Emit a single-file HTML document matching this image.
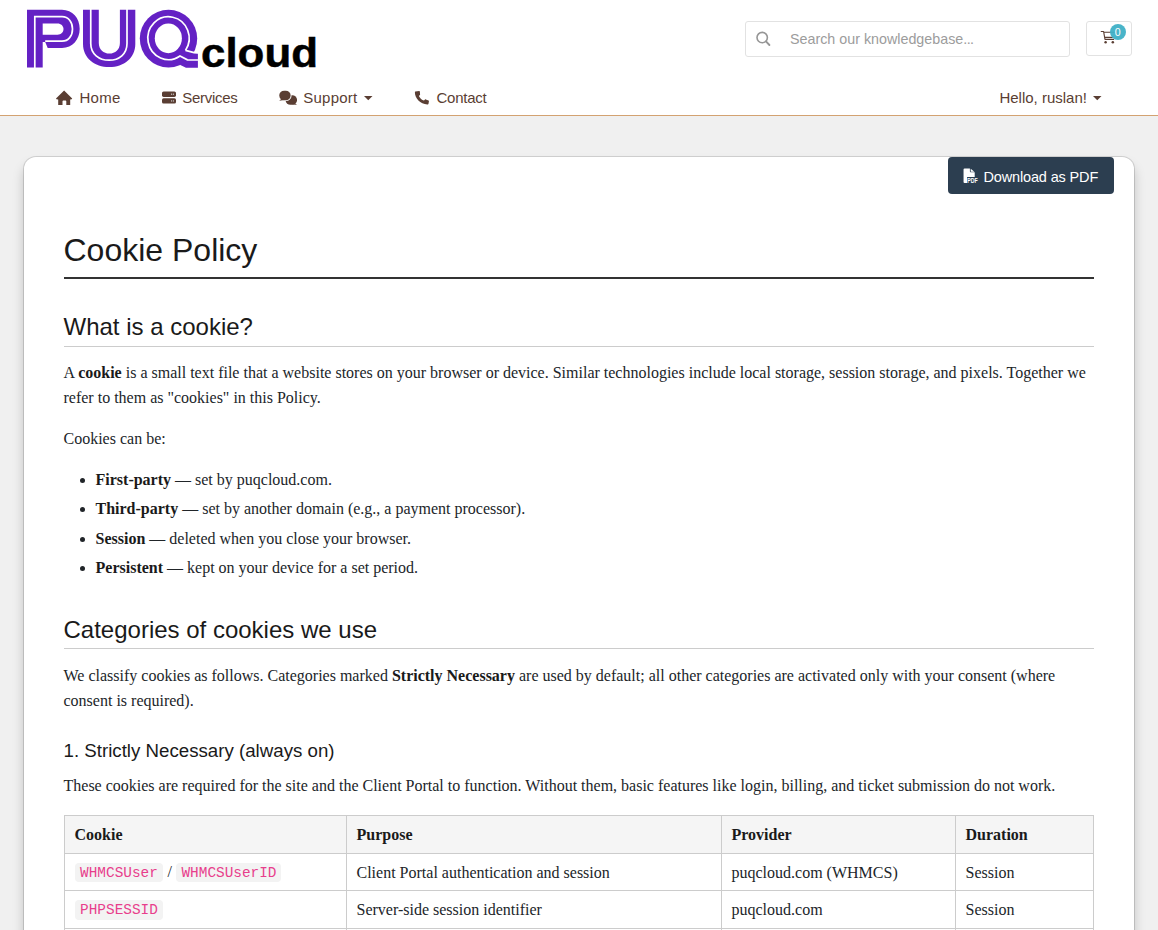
<!DOCTYPE html>
<html><head><meta charset="utf-8">
<style>
*{box-sizing:border-box}
html,body{margin:0;padding:0}
body{width:1158px;height:930px;overflow:hidden;background:#f0f0f0;font-family:"Liberation Sans",sans-serif;position:relative}
.header{position:absolute;left:0;top:0;width:1158px;height:116px;background:#fff;border-bottom:1px solid #d3a271}
.logo{position:absolute;left:26px;top:8px}
.search{position:absolute;left:745px;top:21px;width:325px;height:36px;border:1px solid #e2e2e2;border-radius:3px;background:#fff}
.search .ph{position:absolute;left:44px;top:9px;font-size:14.3px;color:#9c9c9c}
.cart{position:absolute;left:1086px;top:21px;width:46px;height:35px;border:1px solid #e2e2e2;border-radius:3px;background:#fff}
.nav{position:absolute;font-size:15px;color:#5a3e33}
.card{position:absolute;left:24px;top:157px;width:1110px;height:900px;background:#fff;border-radius:12px;box-shadow:0 0 0 1px rgba(0,0,0,.13),0 8px 12px rgba(0,0,0,.21)}
.pdf{position:absolute;left:948px;top:157px;width:166px;height:37px;background:#2c3e50;border-radius:4px;color:#fff;font-size:14.5px}
.content{position:absolute;left:63.5px;top:230px;width:1030px;font-family:"Liberation Serif",serif;font-size:16px;line-height:25px;color:#212529}
h1{margin:0;font-family:"Liberation Sans",sans-serif;font-weight:400;font-size:32px;line-height:40px;color:#1a1a1a;border-bottom:2px solid #333;height:49px}
h2{margin:0;font-family:"Liberation Sans",sans-serif;font-weight:400;font-size:24px;line-height:30px;color:#1a1a1a;border-bottom:1px solid #ccc}
h3{margin:0;font-family:"Liberation Sans",sans-serif;font-weight:400;font-size:18.7px;line-height:24px;color:#1a1a1a}
p{margin:0 0 16px}
ul{margin:0;padding-left:32px}
li{margin-bottom:4.4px}
b{color:#1a1a1a}
table{border-collapse:collapse;width:1030px}
th,td{border:1px solid #ccc;padding:0 10px;text-align:left;height:37.5px}
th{background:#f5f5f5;color:#1a1a1a;height:38px}
code{font-family:"Liberation Mono",monospace;font-size:14.4px;color:#e83e8c;background:#f3f3f3;border-radius:4px;padding:1.7px 5px;margin:0 .6px}
</style></head><body>
<div class="header">
<svg class="logo" width="330" height="80" viewBox="0 0 330 80" style="position:absolute;left:0;top:0">
 <g fill="#6421c4">
  <path d="M27,9.7 H62 C72.5,9.7 79.7,18 79.7,28.85 C79.7,39.7 72.5,48 62,48 H47.7 L45.2,41.9 H42.7 V67.5 H27 Z"/>
  <path d="M83,9.7 V44 C83,58 94.5,67.1 109.15,67.1 C123.8,67.1 135.3,58 135.3,44 V9.7 Z"/>
  <ellipse cx="168.5" cy="38.6" rx="28.7" ry="28.9"/>
  <path d="M178,56 L180.3,64.95 L186,67.7 H197.9 V53.2 L193.9,53 L185.5,51 Z"/>
 </g>
 <g fill="#fff">
  <path d="M42.7,23.4 H57.5 C61,23.4 63.5,25.8 63.5,29 C63.5,32.3 61,34.7 57.5,34.7 H42.7 Z"/>
  <path d="M98.8,0 V43 C98.8,49.5 103.5,53.6 109.35,53.6 C115.2,53.6 119.9,49.5 119.9,43 V0 Z"/>
  <ellipse cx="168.35" cy="38.3" rx="13.55" ry="14.9"/>
 </g>
 <g fill="none" stroke="#fff" stroke-width="1.7">
  <path d="M34.8,68 V16.65 H62 C68.5,16.65 72.5,22 72.5,28.9 C72.5,35.8 68.5,41.15 62,41.15 H45.2"/>
  <path d="M90.75,9 V43.5 C90.75,54 99,60.2 109.1,60.2 C119.2,60.2 127,54 127,43.5 V9"/>
  <path d="M185.5,50.35 A20.65,21.4 0 1 0 180,55.97 L187.4,59.8 L199,60"/>
  <path d="M185.5,50.35 L194,52.6 L199,52.8"/>
 </g>
 <text x="201" y="67" font-family="Liberation Sans" font-weight="700" font-size="40.5" letter-spacing="0" textLength="117" lengthAdjust="spacingAndGlyphs" fill="#000" stroke="#000" stroke-width="0.5">cloud</text>
</svg>
<div class="search">
 <svg width="20" height="20" style="position:absolute;left:9px;top:9px" viewBox="0 0 20 20"><circle cx="7.2" cy="6.6" r="5.2" fill="none" stroke="#969696" stroke-width="1.6"/><path d="M11,10.4 L14.4,14" stroke="#969696" stroke-width="1.9" stroke-linecap="round"/></svg>
 <span class="ph">Search our knowledgebase<span style="letter-spacing:-0.6px">...</span></span>
</div>
<div class="cart">
 <svg width="46" height="35" style="position:absolute;left:-1px;top:-1px" viewBox="0 0 46 35">
  <path d="M15.2,10.5 H17.6 L19,18.4 H27.6 M17.8,11.2 H29 M18.7,16.4 H26.8" fill="none" stroke="#5a3e33" stroke-width="1.15" stroke-linejoin="round" stroke-linecap="round"/>
  <circle cx="19.6" cy="21.3" r="1.25" fill="#5a3e33"/><circle cx="26.8" cy="21.3" r="1.25" fill="#5a3e33"/>
  <circle cx="32" cy="11" r="8" fill="#3fb0c6" fill-opacity="0.95"/>
  <text x="31.7" y="14.8" text-anchor="middle" font-family="Liberation Sans" font-size="10.6" fill="#fff">0</text>
 </svg>
</div>
<div class="nav" style="left:0;top:0;width:1158px;height:115px">
 <svg width="17" height="15" viewBox="0 0 17 15" style="position:absolute;left:56px;top:90.5px;overflow:visible"><path d="M8.1,-0.5 L0,7.4 L0.5,8.2 L2.2,8.5 V14.1 H6.5 V10.5 C6.5,9.9 7,9.5 7.6,9.5 H9.2 C9.8,9.5 10.3,9.9 10.3,10.5 V14.1 H14.2 V8.5 L15.7,8.2 L16.2,7.4 Z" fill="#5a3e33"/></svg>
 <span style="position:absolute;left:79.5px;top:89px;letter-spacing:0.25px">Home</span>
 <svg width="15" height="13" viewBox="0 0 15 13" style="position:absolute;left:162px;top:91px"><rect x="0" y="0.5" width="14" height="5.4" rx="1.6" fill="#5a3e33"/><rect x="0" y="7.2" width="14" height="5.4" rx="1.6" fill="#5a3e33"/><circle cx="9.6" cy="3.2" r=".6" fill="#ddd"/><circle cx="11.4" cy="3.2" r=".6" fill="#ddd"/><circle cx="9.6" cy="9.9" r=".6" fill="#ddd"/><circle cx="11.4" cy="9.9" r=".6" fill="#ddd"/></svg>
 <span style="position:absolute;left:182.2px;top:89px;letter-spacing:-0.28px">Services</span>
 <svg width="19" height="16" viewBox="0 0 19 16" style="position:absolute;left:279px;top:90px"><rect x="6.6" y="5.2" width="11.4" height="9.5" rx="4.8" ry="4.4" fill="#5a3e33"/><path d="M15,13 L18.2,14.9 L13,14.2 Z" fill="#5a3e33"/><rect x="-0.6" y="-0.2" width="13.1" height="11.3" rx="5.6" ry="5.2" fill="#fff"/><rect x="0.3" y="0.7" width="11.3" height="9.5" rx="4.8" ry="4.4" fill="#5a3e33"/><path d="M2.8,8.6 L0.2,10.8 L5.5,9.9 Z" fill="#5a3e33"/></svg>
 <span style="position:absolute;left:303.2px;top:89px;letter-spacing:0.25px">Support</span>
 <svg width="9" height="5" viewBox="0 0 9 5" style="position:absolute;left:363.5px;top:95.5px"><path d="M0,0 H8.5 L4.25,4.3 Z" fill="#5a3e33"/></svg>
 <svg width="16" height="16" viewBox="0 0 16 16" style="position:absolute;left:414px;top:90px;overflow:visible"><path d="M1.3,1.6 L5.2,0.9 C5.5,0.85 5.8,1.1 5.85,1.4 L6.1,4.6 C6.1,4.9 5.9,5.2 5.6,5.3 L4.9,5.9 C5.9,8.2 7.9,10 10,10.6 L10.8,9.7 C11,9.4 11.4,9.3 11.7,9.4 L14.6,10.6 C14.9,10.9 15,11.2 14.9,11.5 L14.5,13.7 C14.4,14.1 14.1,14.4 13.7,14.4 C6.6,14.6 0.6,8.4 0.9,2.1 C0.9,1.85 1.05,1.65 1.3,1.6 Z" fill="#5a3e33"/></svg>
 <span style="position:absolute;left:436.5px;top:89px;letter-spacing:-0.25px">Contact</span>
 <span style="position:absolute;left:999.4px;top:89px">Hello, ruslan!</span>
 <svg width="9" height="5" viewBox="0 0 9 5" style="position:absolute;left:1092.8px;top:95.5px"><path d="M0,0 H8.5 L4.25,4.3 Z" fill="#5a3e33"/></svg>
</div>
</div>
<div class="card"></div>
<div class="pdf">
 <svg width="16" height="16" viewBox="0 0 16 16" style="position:absolute;left:15px;top:11px;overflow:visible"><path d="M0.55,1.6 Q0.55,0.55 1.6,0.55 H6.9 V3.6 C6.9,4 7.1,4.3 7.5,4.3 H11.7 V8.9 H4.1 V15 H1.6 Q0.55,15 0.55,14 Z M7.7,0.8 L11.4,3.7 H7.7 Z" fill="#fff"/><text x="4.3" y="15" font-family="Liberation Sans" font-weight="700" font-size="7.3" fill="#fff" textLength="10.4" lengthAdjust="spacingAndGlyphs">PDF</text></svg>
 <span style="position:absolute;left:35.5px;top:11.5px;letter-spacing:-0.15px">Download as PDF</span>
</div>
<div class="content">
<h1>Cookie Policy</h1>
<h2 id="h2a" style="margin-top:33px;height:35px">What is a cookie?</h2>
<p id="p1" style="margin-top:13px">A <b>cookie</b> is a small text file that a website stores on your browser or device. Similar technologies include local storage, session storage, and pixels. Together we refer to them as "cookies" in this Policy.</p>
<p>Cookies can be:</p>
<ul>
<li><b>First-party</b> — set by puqcloud.com.</li>
<li><b>Third-party</b> — set by another domain (e.g., a payment processor).</li>
<li><b>Session</b> — deleted when you close your browser.</li>
<li><b>Persistent</b> — kept on your device for a set period.</li>
</ul>
<h2 id="h2b" style="margin-top:35px;height:34px">Categories of cookies we use</h2>
<p style="margin-top:14px;margin-bottom:0">We classify cookies as follows. Categories marked <b>Strictly Necessary</b> are used by default; all other categories are activated only with your consent (where consent is required).</p>
<h3 style="margin-top:26.3px">1. Strictly Necessary (always on)</h3>
<p style="margin-top:10px;margin-bottom:0">These cookies are required for the site and the Client Portal to function. Without them, basic features like login, billing, and ticket submission do not work.</p>
<table style="margin-top:16.3px">
<colgroup><col style="width:282px"><col style="width:375px"><col style="width:234px"><col></colgroup>
<tr><th>Cookie</th><th>Purpose</th><th>Provider</th><th>Duration</th></tr>
<tr><td><code>WHMCSUser</code> / <code>WHMCSUserID</code></td><td>Client Portal authentication and session</td><td>puqcloud.com (WHMCS)</td><td>Session</td></tr>
<tr><td><code>PHPSESSID</code></td><td>Server-side session identifier</td><td>puqcloud.com</td><td>Session</td></tr>
<tr><td><code>__cf_bm</code></td><td>Bot management</td><td>Cloudflare</td><td>30 minutes</td></tr>
</table>
</div>
</body></html>
